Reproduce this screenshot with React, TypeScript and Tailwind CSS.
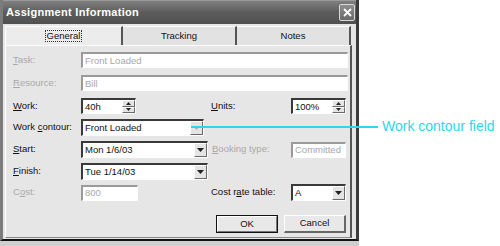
import React from "react";

const Arrow = ({ up = false, size = 3 }: { up?: boolean; size?: number }) => (
  <svg width={size * 2 + 1} height={size + 1} viewBox={`0 0 ${size * 2 + 1} ${size + 1}`}>
    {up ? (
      <polygon points={`0,${size + 1} ${size * 2 + 1},${size + 1} ${size + 0.5},0`} fill="#222" />
    ) : (
      <polygon points={`0,0 ${size * 2 + 1},0 ${size + 0.5},${size + 1}`} fill="#222" />
    )}
  </svg>
);

const Field = ({
  w,
  h = 16,
  text,
  disabled = false,
  children,
}: {
  w: number;
  h?: number;
  text: string;
  disabled?: boolean;
  children?: React.ReactNode;
}) => (
  <div
    className={`flex items-stretch border-t-2 border-l-2 border-b border-r ${
      disabled ? "border-t-[#9a9a9a] border-l-[#9a9a9a]" : "border-t-[#3a3a3a] border-l-[#3a3a3a]"
    } border-b-white border-r-white bg-white`}
    style={{ width: w, height: h }}
  >
    <div
      className={`flex-1 pl-[2px] leading-none flex items-center ${
        disabled ? "text-[#a8a8a8]" : "text-[#111]"
      }`}
    >
      {text}
    </div>
    {children}
  </div>
);

const DropBtn = ({ dim = false }: { dim?: boolean }) => (
  <div className="w-[13px] flex items-center justify-center bg-[#e4e4e4] border-t border-l border-white border-b border-r border-b-[#6a6a6a] border-r-[#6a6a6a]">
    {dim ? (
      <svg width="7" height="4" viewBox="0 0 7 4">
        <polygon points="0,0 7,0 3.5,4" fill="#b0b0b0" />
      </svg>
    ) : (
      <Arrow size={3} />
    )}
  </div>
);

const Spin = () => (
  <div className="w-[13px] flex flex-col">
    <div className="flex-1 flex items-center justify-center bg-[#e4e4e4] border-t border-l border-white border-b border-r border-b-[#6a6a6a] border-r-[#6a6a6a]">
      <Arrow up size={2} />
    </div>
    <div className="flex-1 flex items-center justify-center bg-[#e4e4e4] border-t border-l border-white border-b border-r border-b-[#6a6a6a] border-r-[#6a6a6a]">
      <Arrow size={2} />
    </div>
  </div>
);

const Label = ({
  children,
  disabled = false,
  w = 68,
}: {
  children: React.ReactNode;
  disabled?: boolean;
  w?: number;
}) => (
  <div
    className={`shrink-0 ${disabled ? "text-[#a8a8a8]" : "text-[#111]"}`}
    style={{ width: w }}
  >
    {children}
  </div>
);

export default function App() {
  return (
    <div className="relative w-[500px] h-[246px] bg-white overflow-hidden font-['Liberation_Sans',Arial,sans-serif] text-[9.5px]">
      <div className="w-[359px] h-[246px] flex flex-col">
        <div className="h-[241px] flex flex-col bg-[#e6e6e6] border-l-[3px] border-r-[3px] border-b-[2px] border-l-[#7c7c7c] border-r-[#3c3c3c] border-b-[#111]">
          {/* Title bar */}
          <div className="h-[24px] shrink-0 flex items-center justify-between pl-[3px] pr-[1px] bg-gradient-to-b from-[#808080] via-[#5c5c5c] to-[#505050] border-t border-t-[#9a9a9a]">
            <span className="text-white font-bold text-[11px] tracking-[0.3px]">Assignment Information</span>
            <div className="w-[16px] h-[17px] rounded-[2px] border border-[#d8d8d8] bg-gradient-to-b from-[#8e8e8e] to-[#6a6a6a] flex items-center justify-center">
              <svg width="9" height="9" viewBox="0 0 9 9">
                <path d="M1 1 L8 8 M8 1 L1 8" stroke="white" strokeWidth="1.8" />
              </svg>
            </div>
          </div>
          {/* Body */}
          <div className="flex-1 flex flex-col px-[2px] pt-[2px]">
            {/* Tabs */}
            <div className="h-[19px] shrink-0 flex">
              <div className="w-[118px] flex items-center justify-center bg-[#ececec] border-t border-l border-white border-r-2 border-r-[#555]">
                <span className="px-[1px] border border-dotted border-[#333] leading-[10px] text-[#111]">General</span>
              </div>
              <div className="w-[114px] flex items-center justify-center bg-[#e2e2e2] border-t border-white border-r-2 border-r-[#555] text-[#111]">
                Tracking
              </div>
              <div className="w-[114px] flex items-center justify-center bg-[#e2e2e2] border-t border-white border-r-2 border-r-[#555] text-[#111]">
                Notes
              </div>
            </div>
            {/* Panel */}
            <div className="flex-1 flex flex-col pl-[7px] pt-[6px] border-l border-l-white border-t border-t-white border-r-2 border-r-[#555] border-b border-b-[#888] mr-[2px] mb-[1px]">
              <div className="flex items-center h-[16px]">
                <Label disabled>
                  <u>T</u>ask:
                </Label>
                <Field w={267} text="Front Loaded" disabled />
              </div>
              <div className="flex items-center h-[16px] mt-[7px]">
                <Label disabled>
                  <u>R</u>esource:
                </Label>
                <Field w={267} text="Bill" disabled />
              </div>
              <div className="flex items-center h-[16px] mt-[7px]">
                <Label>
                  <u>W</u>ork:
                </Label>
                <Field w={55} text="40h">
                  <Spin />
                </Field>
                <div className="w-[75px]" />
                <Label w={80}>
                  <u>U</u>nits:
                </Label>
                <Field w={55} text="100%">
                  <Spin />
                </Field>
              </div>
              <div className="flex items-center h-[17px] mt-[5px]">
                <Label>
                  Work <u>c</u>ontour:
                </Label>
                <Field w={123} h={17} text="Front Loaded">
                  <DropBtn dim />
                </Field>
              </div>
              <div className="flex items-center h-[17px] mt-[5px]">
                <Label>
                  <u>S</u>tart:
                </Label>
                <Field w={127} h={17} text="Mon 1/6/03">
                  <DropBtn />
                </Field>
                <div className="w-[4px]" />
                <Label w={79} disabled>
                  <u>B</u>ooking type:
                </Label>
                <Field w={55} text="Committed" disabled />
              </div>
              <div className="flex items-center h-[17px] mt-[5px]">
                <Label>
                  <u>F</u>inish:
                </Label>
                <Field w={127} h={17} text="Tue 1/14/03">
                  <DropBtn />
                </Field>
              </div>
              <div className="flex items-center h-[17px] mt-[4px]">
                <Label disabled>
                  C<u>o</u>st:
                </Label>
                <Field w={57} text="800" disabled />
                <div className="w-[73px]" />
                <Label w={80}>
                  Cost r<u>a</u>te table:
                </Label>
                <Field w={55} h={17} text="A">
                  <DropBtn />
                </Field>
              </div>
              <div className="flex h-[18px] mt-[14px] pl-[203px] gap-[6px]">
                <div className="w-[62px] flex items-center justify-center border border-[#111] bg-[#e8e8e8] text-[#111]">
                  <div className="w-full h-full flex items-center justify-center border-t border-l border-white border-b border-r border-b-[#777] border-r-[#777]">
                    OK
                  </div>
                </div>
                <div className="w-[62px] flex items-center justify-center bg-[#e8e8e8] text-[#111] border-t border-l border-white border-b-2 border-r-2 border-b-[#666] border-r-[#666]">
                  Cancel
                </div>
              </div>
            </div>
          </div>
        </div>
        <div className="flex-1 bg-[#cfcfcf]" />
      </div>
      {/* Callout */}
      <div className="absolute left-[191px] top-[126px] w-[187px] h-[2px] bg-[#2fd6e8]" />
      <div className="absolute left-[382px] top-[117px] text-[14px] leading-[18px] text-[#2fd6e8] font-['Liberation_Sans',Arial,sans-serif]">
        Work contour field
      </div>
    </div>
  );
}
